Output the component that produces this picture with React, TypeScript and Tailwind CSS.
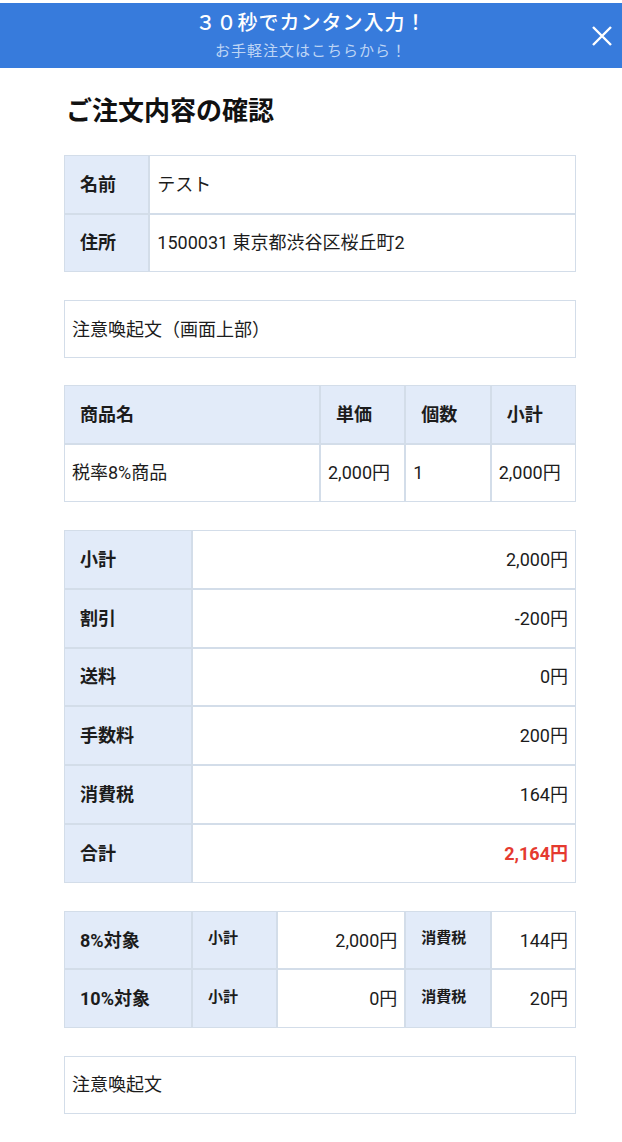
import React from "react";

const font = { fontFamily: 'Roboto, "Noto Sans CJK JP", sans-serif' };

const border = "border border-[#d3dde9]";
const label = `${border} bg-[#e2ebf9] font-bold flex items-center pl-[15px]`;
const value = `${border} bg-white flex items-center pl-[7px]`;
const valueRight = `${border} bg-white flex items-center justify-end pr-[7px]`;

function Header() {
    return (
        <div className="relative mt-[3px] h-[65px] bg-[#377bdc] flex flex-col items-center justify-center">
            <div className="text-[20px] leading-[24px] tracking-[1px] text-white font-medium">
                ３０秒でカンタン入力！
            </div>
            <div className="mt-[6px] text-[15px] leading-[20px] tracking-[1px] text-[#bed5f5]">
                お手軽注文はこちらから！
            </div>
            {/* close button */}
            <svg
                className="absolute right-[10px] top-[23px]"
                width="20"
                height="20"
                viewBox="0 0 20 20"
                fill="none"
                stroke="white"
                strokeWidth="2.4"
            >
                <path d="M1 1L19 19M19 1L1 19" />
            </svg>
        </div>
    );
}

export default function App() {
    return (
        <div className="w-[622px] min-h-[1142px] bg-white text-[#1c1c1c] text-[18px]" style={font}>
            <Header />

            <div className="w-[512px] ml-[64px] pb-7">
                <h1 className="mt-[25px] mb-[26px] pl-[2px] text-[26px] leading-[36px] font-bold text-[#111]">
                    ご注文内容の確認
                </h1>

                {/* Customer */}
                <div className="grid grid-cols-[1fr_5fr] auto-rows-[58.5px] mb-7">
                    <div className={label}>名前</div>
                    <div className={value}>テスト</div>
                    <div className={label}>住所</div>
                    <div className={value}>1500031 東京都渋谷区桜丘町2</div>
                </div>

                <div className={`${value} h-[58px] mb-[27px]`}>注意喚起文（画面上部）</div>

                {/* Items */}
                <div className="grid grid-cols-[3fr_1fr_1fr_1fr] auto-rows-[58.5px] mb-7">
                    <div className={label}>商品名</div>
                    <div className={label}>単価</div>
                    <div className={label}>個数</div>
                    <div className={label}>小計</div>
                    <div className={value}>税率8%商品</div>
                    <div className={value}>2,000円</div>
                    <div className={value}>1</div>
                    <div className={value}>2,000円</div>
                </div>

                {/* Totals */}
                <div className="grid grid-cols-[1fr_3fr] auto-rows-[58.8px] mb-7">
                    <div className={label}>小計</div>
                    <div className={valueRight}>2,000円</div>
                    <div className={label}>割引</div>
                    <div className={valueRight}>-200円</div>
                    <div className={label}>送料</div>
                    <div className={valueRight}>0円</div>
                    <div className={label}>手数料</div>
                    <div className={valueRight}>200円</div>
                    <div className={label}>消費税</div>
                    <div className={valueRight}>164円</div>
                    <div className={label}>合計</div>
                    <div className={`${valueRight} font-bold text-[#e53a2f]`}>2,164円</div>
                </div>

                {/* Tax breakdown */}
                <div className="grid grid-cols-[3fr_2fr_3fr_2fr_2fr] auto-rows-[58.5px] mb-7">
                    <div className={label}>8%対象</div>
                    <div className={`${label} text-[15px] pb-[3px]`}>小計</div>
                    <div className={valueRight}>2,000円</div>
                    <div className={`${label} text-[15px] pb-[3px]`}>消費税</div>
                    <div className={valueRight}>144円</div>
                    <div className={label}>10%対象</div>
                    <div className={`${label} text-[15px] pb-[3px]`}>小計</div>
                    <div className={valueRight}>0円</div>
                    <div className={`${label} text-[15px] pb-[3px]`}>消費税</div>
                    <div className={valueRight}>20円</div>
                </div>

                <div className={`${value} h-[58px]`}>注意喚起文</div>
            </div>
        </div>
    );
}
